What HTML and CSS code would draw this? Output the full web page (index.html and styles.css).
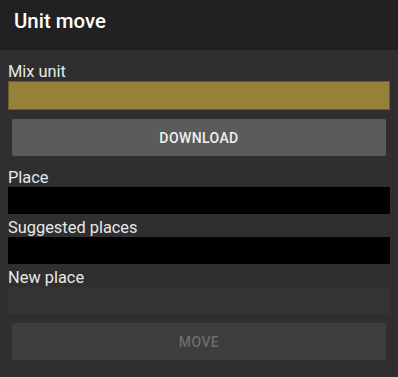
FILE: index.html
```html
<!DOCTYPE html>
<html lang="en">
<head>
    <meta charset="UTF-8">
    <meta name="viewport" content="width=device-width, initial-scale=1.0">
    <title>Unit move</title>
    <link rel="stylesheet" href="styles.css">
</head>
<body>
    <!-- toolbar -->
    <div class="toolbar">Unit move</div>

    <div class="content">
        <div class="label">Mix unit</div>
        <div class="field field-mix"></div>

        <button class="btn btn-download">DOWNLOAD</button>

        <div class="label label-first">Place</div>
        <div class="field field-dark"></div>

        <div class="label">Suggested places</div>
        <div class="field field-dark"></div>

        <div class="label">New place</div>
        <div class="field field-empty"></div>

        <button class="btn btn-move" disabled>MOVE</button>
    </div>
</body>
</html>
```

FILE: styles.css
```css
body {
    margin: 0;
    padding: 0;
    background: #2f2f2f;
    height: 100vh;
    overflow: hidden;
    font-family: Roboto, "Liberation Sans", sans-serif;
    color: #e6e6e6;
}

/* toolbar */
.toolbar {
    height: 50px;
    background: #212121;
    box-sizing: border-box;
    padding: 9px 0 0 14px;
    font-size: 20.4px;
    font-weight: 500;
    line-height: 24px;
    color: #ffffff;
}

.content {
    display: flex;
    flex-direction: column;
    padding: 12px 8px 0 8px;
}

.label {
    font-size: 16.4px;
    line-height: 19px;
    margin-top: 4px;
    color: #e8e8e8;
}

.content > .label:first-child {
    margin-top: 0;
}

.label-first {
    margin-top: 12px;
}

.field {
    height: 27px;
    box-sizing: border-box;
}

.field-mix {
    height: 29px;
    background: #95813a;
    border: 1px solid #6a5c2b;
}

.field-dark {
    background: #000000;
}

.field-empty {
    background: #343434;
}

/* buttons */
.btn {
    margin: 9px 4px 0 4px;
    height: 37px;
    border: none;
    border-radius: 2px;
    font-family: Roboto, "Liberation Sans", sans-serif;
    font-size: 14px;
    font-weight: 500;
    letter-spacing: 0.4px;
    padding: 0;
}

.btn-download {
    background: #5b5b5b;
    color: #f0f0f0;
}

.btn-move {
    background: #3d3d3d;
    color: #6c6c6c;
}
```
